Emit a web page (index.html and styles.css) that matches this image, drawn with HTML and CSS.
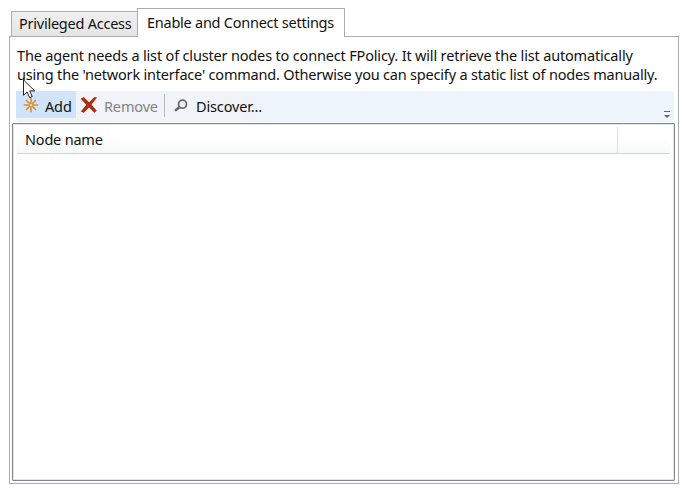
FILE: index.html
```html
<!DOCTYPE html>
<html lang="en">
<head>
<meta charset="utf-8">
<title>Enable and Connect settings</title>
<link rel="stylesheet" href="styles.css">
</head>
<body>
<main class="settings">
  <div class="tabs">
    <div class="tab"><span class="t-priv">Privileged Access</span></div>
    <div class="tab active"><span class="t-enable">Enable and Connect settings</span></div>
  </div>
  <section class="panel">
    <p class="description"><span class="line1">The agent needs a list of cluster nodes to connect FPolicy. It will retrieve the list automatically</span><br><span class="line2">using the 'network interface' command. Otherwise you can specify a static list of nodes manually.</span></p>
    <div class="toolbar">
      <div class="commands">
        <div class="button add">
          <svg width="16" height="16" viewBox="0 0 16 16" fill="none" stroke="#d88c35" stroke-width="1.6"><path d="M8 .8v14.4M.8 8h14.4M3 3l10 10M13 3L3 13"/><circle cx="8" cy="8" r="1.3" stroke="none" fill="#f8d8a8"/></svg>
          <span>Add</span>
        </div>
        <div class="button remove">
          <svg width="18" height="18" viewBox="0 0 18 18"><path fill="#ad2c12" d="M.7 2.8L3.7 1 9 6.2 14.5 1l2.5.5-5.5 7.1 5.2 6.2-2.3 1.9L9 11.4 3.8 16.7.8 15.6 6.3 8.8z"/></svg>
          <span>Remove</span>
        </div>
        <i class="separator"></i>
        <div class="button discover">
          <svg width="16" height="16" viewBox="0 0 16 16" fill="none" stroke="#6b6b6b"><circle cx="9.5" cy="6.2" r="4" stroke-width="1.8"/><path stroke-width="2.6" d="M6.4 9.2L2 12.8"/></svg>
          <span>Discover...</span>
        </div>
      </div>
      <svg class="overflow" width="7" height="8" viewBox="0 0 7 8" fill="#666"><path d="M0 0h6v1H0zM0 4h6L3 7z"/></svg>
    </div>
    <div class="list">
      <div class="header"><div class="column"><span>Node name</span></div><div class="rest"></div></div>
    </div>
  </section>
  <svg class="cursor" width="13" height="20" viewBox="0 0 13 20"><path d="M.5.8v15.5l3.6-3.4 2.5 5.7 2.6-1.1-2.5-5.6h5z" fill="#fff" stroke="#222" stroke-width="1"/></svg>
</main>
</body>
</html>
```
FILE: styles.css
```css
* { box-sizing: border-box; }
body {
  margin: 0;
  background: #fff;
  color: #111;
  font: 14.5px/19px "Noto Sans", "Open Sans", sans-serif;
  white-space: nowrap;
  overflow: hidden;
}
svg { display: block; flex: none; }
.settings { position: relative; padding: 8px 6px 6px 9px; height: 490px; }
.tabs { display: flex; align-items: flex-end; height: 28px; padding-left: 2px; }
.tab {
  width: 126px;
  height: 25px;
  padding: 2px 0 0 7px;
  border: 1px solid #acacac;
  border-width: 1px 0 0 1px;
  background: linear-gradient(#f0f0f0, #e5e5e5);
}
.tab.active {
  position: relative;
  width: 208px;
  height: 29px;
  margin-bottom: -1px;
  padding: 4px 0 0 9px;
  border-right-width: 1px;
  background: #fff;
}
.panel { width: 670px; height: 448px; border: 1px solid #acacac; padding: 9px 3px 2px 2px; }
.description { margin: 0 0 7px 5px; height: 38px; }
.toolbar {
  display: flex;
  justify-content: space-between;
  width: 658px;
  height: 31px;
  margin: 0 0 1px 4px;
  border-radius: 3px;
  background: #edf4fc;
}
.commands { display: flex; height: 31px; width: 250px; background: linear-gradient(90deg, #f0f3f8 90%, #edf4fc); border-radius: 3px 0 0 3px; }
.button { display: flex; align-items: flex-start; padding-top: 6px; letter-spacing: -0.15px; }
.add { width: 60px; height: 27px; padding-left: 7px; background: #d0e5fb; }
.add span { margin-left: 6px; }
.remove { width: 88px; padding-left: 4px; color: #838383; }
.remove svg { margin-top: -1px; }
.remove span { margin-left: 6px; }
.separator { width: 1px; height: 23px; margin-top: 3px; background: #b5b9be; }
.discover { padding-left: 8px; }
.discover svg { margin-top: 1px; }
.discover span { margin-left: 7px; }
.overflow { margin: 20px 3px 0 0; }
.list { width: 663px; height: 358px; border: 1px solid #828790; box-shadow: inset 0 0 0 1px #dfe4ed; border-radius: 1px; padding: 3px 4px 0 4px; }
.header { display: flex; height: 27px; border-bottom: 1px solid #d5d5d5; background: linear-gradient(#fff 40%, #f7f8f9); }
.column { width: 601px; padding: 3px 0 0 8px; border-right: 1px solid #dedfe1; letter-spacing: -0.2px; }
.cursor { position: absolute; left: 23px; top: 79px; }
.t-priv { letter-spacing: -0.24px; }
.t-enable { letter-spacing: -0.25px; }
.line1 { letter-spacing: -0.17px; }
.line2 { letter-spacing: -0.2px; }
```
